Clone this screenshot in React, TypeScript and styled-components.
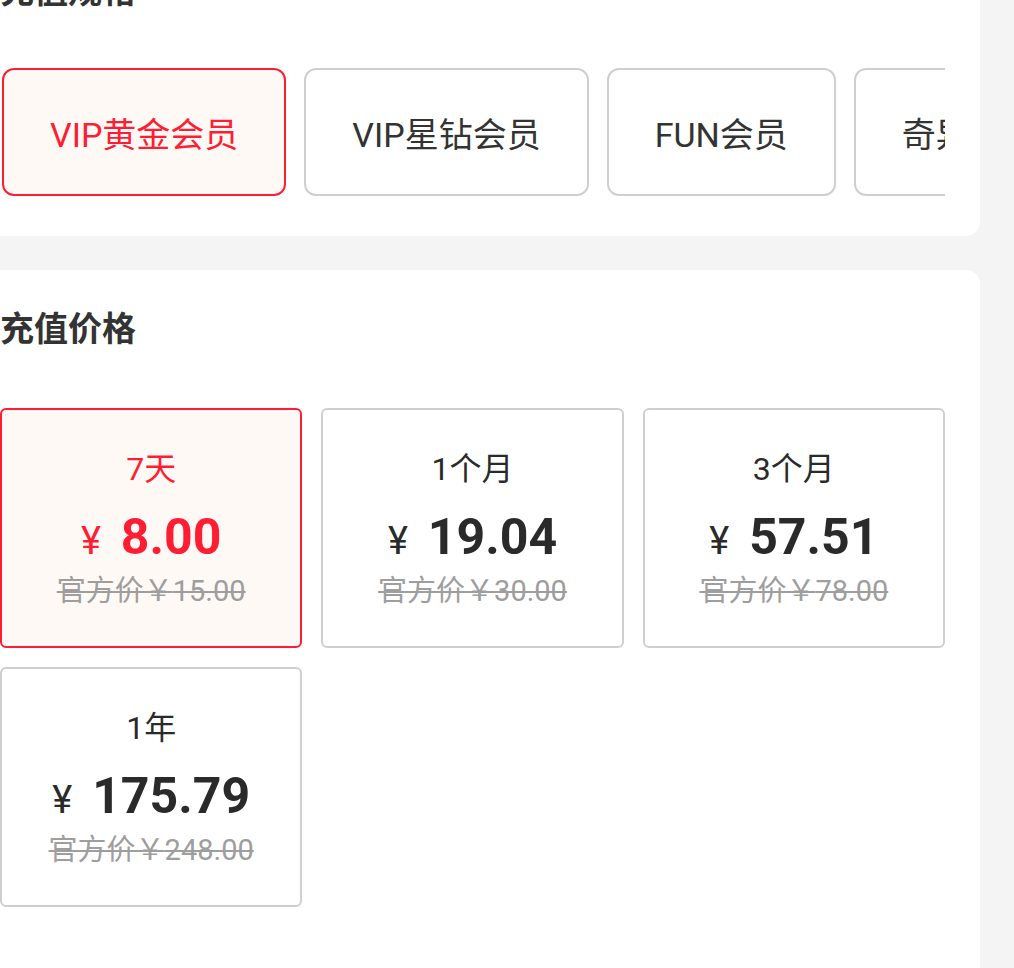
import styled, { createGlobalStyle } from "styled-components";

const SPECS = [
  { name: "VIP黄金会员", active: true },
  { name: "VIP星钻会员", active: false },
  { name: "FUN会员", active: false },
  { name: "奇异果会员", active: false },
];

const PRICES = [
  { label: "7天", price: "8.00", official: "15.00", active: true },
  { label: "1个月", price: "19.04", official: "30.00", active: false },
  { label: "3个月", price: "57.51", official: "78.00", active: false },
  { label: "1年", price: "175.79", official: "248.00", active: false },
];

const RED = "#ff1d34";

const GlobalStyle = createGlobalStyle`
  html, body {
    margin: 0;
    padding: 0;
    background: #f4f4f4;
    overflow: hidden;
  }
  body {
    font-family: Roboto, "Noto Sans CJK SC", sans-serif;
    color: #333;
  }
`;

// the screenshot is a crop of a wider page, so the page bleeds past the left/top edge
const Page = styled.div`
  width: 1049px;
  box-sizing: border-box;
  margin: -68px 0 0 -35px;
  padding-right: 34px;
  display: flex;
  flex-direction: column;
  gap: 34px;
`;

const Card = styled.section<{ $bottom: number }>`
  background: #fff;
  border-radius: 14px;
  padding: 40px 35px ${(p) => p.$bottom}px;
`;

const Title = styled.h2<{ $gap: number }>`
  margin: 0 0 ${(p) => p.$gap}px;
  font-size: 34px;
  line-height: 34px;
  font-weight: 700;
  color: #333;
  font-family: "Noto Sans CJK SC", sans-serif;
`;

const TabRow = styled.div`
  display: flex;
  gap: 18px;
  padding: 0 2px;
  overflow-x: auto;
  scrollbar-width: none;
  &::-webkit-scrollbar {
    display: none;
  }
`;

const Tab = styled.div<{ $active: boolean }>`
  flex-shrink: 0;
  height: 128px;
  box-sizing: border-box;
  padding: 0 46px;
  display: flex;
  align-items: center;
  justify-content: center;
  border: 2px solid ${(p) => (p.$active ? RED : "#cfcfcf")};
  border-radius: 12px;
  background: ${(p) => (p.$active ? "#fff9f5" : "#fff")};
  color: ${(p) => (p.$active ? RED : "#333")};
  font-size: 34px;
  white-space: nowrap;
`;

const PriceGrid = styled.div`
  display: grid;
  grid-template-columns: repeat(3, 1fr);
  gap: 19px;
`;

const PriceCard = styled.div<{ $active: boolean }>`
  height: 240px;
  box-sizing: border-box;
  padding-top: 39px;
  display: flex;
  flex-direction: column;
  align-items: center;
  border: 2px solid ${(p) => (p.$active ? RED : "#cfcfcf")};
  border-radius: 6px;
  background: ${(p) => (p.$active ? "#fff9f5" : "#fff")};
  color: ${(p) => (p.$active ? RED : "#2a2a2a")};
`;

const Period = styled.div`
  font-size: 32px;
  line-height: 40px;
`;

const PriceLine = styled.div`
  margin-top: 20px;
  display: flex;
  align-items: baseline;
  gap: 20px;
  line-height: 56px;
`;

const Yen = styled.span`
  font-size: 38px;
`;

const Amount = styled.span`
  font-size: 50px;
  font-weight: 700;
`;

const Official = styled.div`
  margin-top: 4px;
  font-size: 29px;
  line-height: 36px;
  color: #9e9e9e;
  text-decoration: line-through;
`;

export default function App() {
  return (
    <>
      <GlobalStyle />
      <Page>
        <Card $bottom={40}>
          <Title $gap={62}>充值规格</Title>
          <TabRow>
            {SPECS.map((s) => (
              <Tab key={s.name} $active={s.active}>
                {s.name}
              </Tab>
            ))}
          </TabRow>
        </Card>
        <Card $bottom={80}>
          <Title $gap={64}>充值价格</Title>
          <PriceGrid>
            {PRICES.map((p) => (
              <PriceCard key={p.label} $active={p.active}>
                <Period>{p.label}</Period>
                <PriceLine>
                  <Yen>¥</Yen>
                  <Amount>{p.price}</Amount>
                </PriceLine>
                <Official>官方价￥{p.official}</Official>
              </PriceCard>
            ))}
          </PriceGrid>
        </Card>
      </Page>
    </>
  );
}
